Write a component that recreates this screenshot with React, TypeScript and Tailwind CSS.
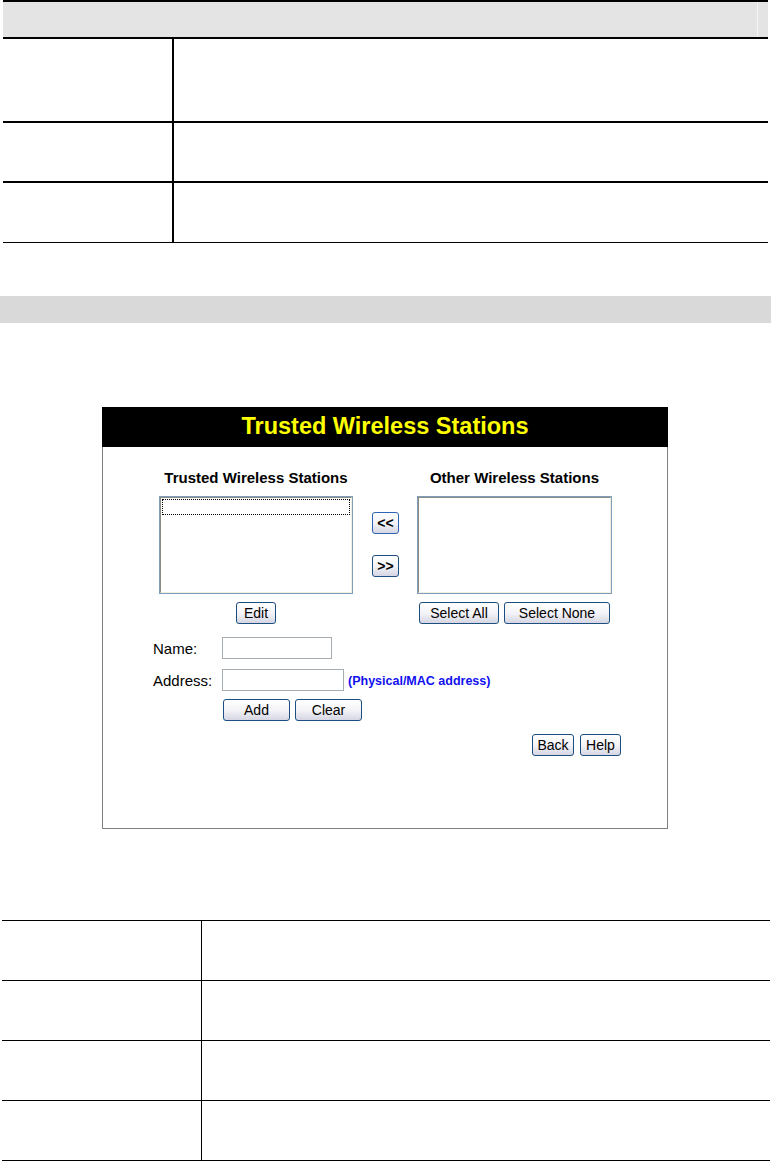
import React from "react";

const btn =
  "h-[22px] rounded-[3px] border border-[#1c4f80] bg-linear-to-b from-white via-[#f4f4f8] to-[#d6d6e4] text-[14px] leading-none text-black flex items-center justify-center";

function Listbox({ focused }: { focused?: boolean }) {
  return (
    <div className="h-[98px] w-full border border-[#7f9db9] bg-white">
      <div className="h-full w-full border-l border-t border-[#8c8c84] border-r border-b border-r-[#f1efe2] border-b-[#f1efe2] p-[1px]">
        {focused && <div className="h-[16px] w-full border border-dotted border-black" />}
      </div>
    </div>
  );
}

function Field({ label, width }: { label: string; width: string }) {
  return (
    <div className="flex items-center">
      <span className="w-[69px] text-[15px] leading-none text-black">{label}</span>
      <div className={`h-[22px] ${width} border border-[#a5acb2] bg-white`} />
    </div>
  );
}

function TrustedStations() {
  return (
    <div className="ml-[102px] w-[566px]">
      <div className="flex h-[40px] items-center justify-center bg-black">
        <span className="text-[23.5px] font-bold text-[#ffff00]">Trusted Wireless Stations</span>
      </div>
      <div className="h-[382px] border-x border-b border-[#808080] pt-[22px]">
        {/* lists */}
        <div className="flex pl-[56px]">
          <div className="flex w-[194px] flex-col items-center">
            <p className="text-[15px] font-bold leading-[17px] text-black whitespace-nowrap">Trusted Wireless Stations</p>
            <div className="mt-[10px] w-full">
              <Listbox focused />
            </div>
            <button className={`${btn} mt-[8px] w-[40px]`}>Edit</button>
          </div>
          <div className="ml-[19px] flex w-[27px] flex-col gap-[21px] pt-[43px]">
            <button className={`${btn} h-[21px] w-[27px] border-[#2f64b4] text-[11px] font-bold`}>&lt;&lt;</button>
            <button className={`${btn} h-[21px] w-[27px] text-[11px] font-bold`}>&gt;&gt;</button>
          </div>
          <div className="ml-[18px] flex w-[195px] flex-col items-center">
            <p className="text-[15px] font-bold leading-[17px] text-black whitespace-nowrap">Other Wireless Stations</p>
            <div className="mt-[10px] w-full">
              <Listbox />
            </div>
            <div className="mt-[8px] flex gap-[5px]">
              <button className={`${btn} w-[80px]`}>Select All</button>
              <button className={`${btn} w-[106px]`}>Select None</button>
            </div>
          </div>
        </div>

        {/* form */}
        <div className="mt-[13px] flex flex-col gap-[10px] pl-[50px]">
          <Field label="Name:" width="w-[110px]" />
          <div className="flex items-center">
            <Field label="Address:" width="w-[122px]" />
            <span className="ml-[4px] mt-[3px] text-[12.5px] font-bold text-[#1010f0]">(Physical/MAC address)</span>
          </div>
        </div>
        <div className="mt-[8px] flex gap-[5px] pl-[120px]">
          <button className={`${btn} w-[67px]`}>Add</button>
          <button className={`${btn} w-[67px]`}>Clear</button>
        </div>
        <div className="mt-[13px] flex justify-end gap-[6px] pr-[46px]">
          <button className={`${btn} w-[42px]`}>Back</button>
          <button className={`${btn} w-[41px]`}>Help</button>
        </div>
      </div>
    </div>
  );
}

export default function App() {
  return (
    <div className="w-[771px] bg-white font-['Liberation_Sans',Arial,sans-serif]">
      {/* Top table */}
      <div className="ml-[3px] w-[765px]">
        <div className="h-[2px] bg-black" />
        <div className="flex h-[35px]">
          <div className="flex-1 bg-[#e4e4e4]" />
          <div className="w-[1px] bg-[#f4f4f4]" />
          <div className="w-[10px] bg-[#e4e4e4]" />
        </div>
        <div className="h-[2px] bg-black" />
        <div className="flex h-[82px]">
          <div className="w-[169px]" />
          <div className="w-[2px] bg-black" />
        </div>
        <div className="h-[2px] bg-black" />
        <div className="flex h-[58px]">
          <div className="w-[169px]" />
          <div className="w-[2px] bg-black" />
        </div>
        <div className="h-[2px] bg-black" />
        <div className="flex h-[59px]">
          <div className="w-[169px]" />
          <div className="w-[2px] bg-black" />
        </div>
        <div className="h-[1px] bg-black" />
      </div>

      <div className="mt-[53px] h-[27px] bg-[#d9d9d9]" />

      <div className="mt-[84px]">
        <TrustedStations />
      </div>

      {/* Bottom table */}
      <div className="ml-[2px] mt-[91px] w-[768px]">
        {[0, 1, 2, 3].map((i) => (
          <div key={i}>
            <div className="h-[1px] bg-black" />
            <div className="flex h-[59px]">
              <div className="w-[199px]" />
              <div className="w-[1px] bg-black" />
            </div>
          </div>
        ))}
        <div className="h-[1px] bg-black" />
      </div>
    </div>
  );
}
